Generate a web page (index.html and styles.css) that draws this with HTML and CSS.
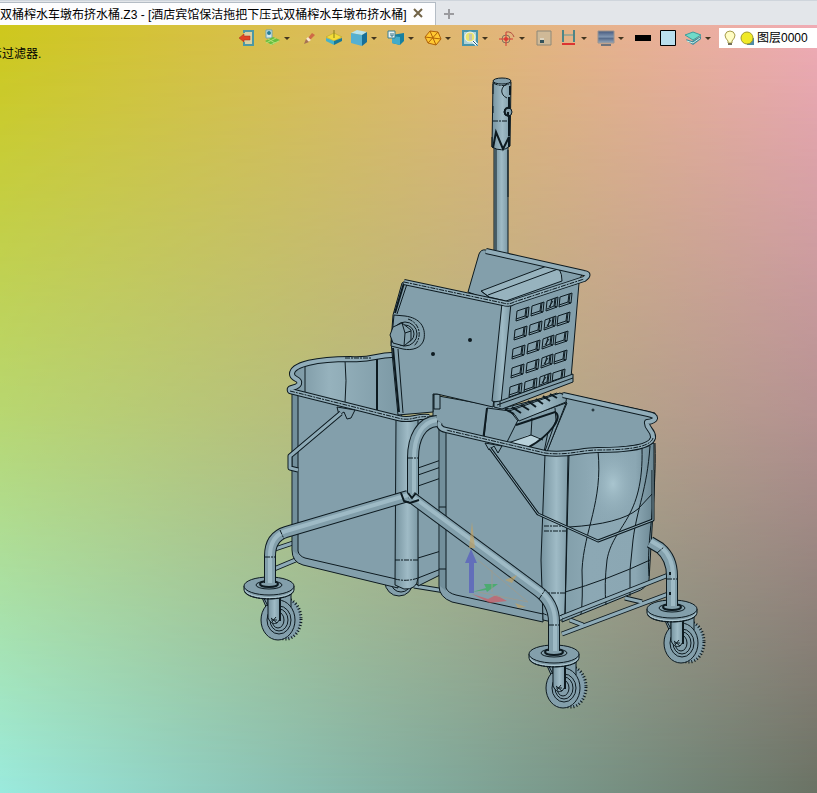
FILE: index.html
```html
<!DOCTYPE html>
<html lang="zh-CN">
<head>
    <meta charset="UTF-8">
    <meta name="viewport" content="width=device-width, initial-scale=1.0">
    <title>双桶榨水车墩布挤水桶.Z3</title>
    <link rel="stylesheet" href="styles.css">
</head>
<body>
    <header class="tab-bar">
        <div class="tab">
            <span class="tab-title">双桶榨水车墩布挤水桶.Z3 - [酒店宾馆保洁拖把下压式双桶榨水车墩布挤水桶]</span>
            <button class="tab-close" type="button" aria-label="关闭">
                <svg width="10" height="10" viewBox="0 0 10 10"><path d="M1 1L9 9M9 1L1 9" stroke="#716347" stroke-width="2"/></svg>
            </button>
        </div>
        <button class="tab-add" type="button" aria-label="新建">
            <svg width="10" height="10" viewBox="0 0 10 10"><path d="M5 0V10M0 5H10" stroke="#9b9b9f" stroke-width="2"/></svg>
        </button>
    </header>

    <main class="viewport">
        <svg class="model" viewBox="0 25 817 768" preserveAspectRatio="xMidYMid meet" aria-hidden="true">
            <defs>
                <linearGradient id="tube"><stop offset="0" stop-color="#7794a0"/><stop offset=".55" stop-color="#9fbbc6"/><stop offset="1" stop-color="#7c99a5"/></linearGradient>
                <linearGradient id="inner"><stop offset="0" stop-color="#77939f"/><stop offset=".35" stop-color="#96b2bd"/><stop offset="1" stop-color="#7b98a4"/></linearGradient>
                <linearGradient id="side"><stop offset="0" stop-color="#819ea9"/><stop offset=".3" stop-color="#8ca8b4"/><stop offset=".8" stop-color="#8ba7b3"/><stop offset="1" stop-color="#6b8793"/></linearGradient>
                <radialGradient id="shine"><stop offset="0" stop-color="#a9c5cf"/><stop offset="1" stop-color="#8ca8b4" stop-opacity="0"/></radialGradient>

                <symbol id="caster" viewBox="-30 -15 70 75" overflow="visible">
                    <ellipse class="tread" cx="18" cy="34" rx="14" ry="20"/>
                    <ellipse class="knobs" cx="17" cy="34" rx="15" ry="20"/>
                    <path class="part" d="M-9 8L-2 24L4 34L22 22V8z"/>
                    <ellipse class="part" cx="9" cy="35" rx="17" ry="20"/>
                    <ellipse class="thin" cx="10" cy="35" rx="12" ry="14"/>
                    <ellipse class="part" cx="10" cy="35" rx="9" ry="11"/>
                    <ellipse class="thin" cx="9" cy="35" rx="6" ry="8"/>
                    <path class="part" d="M-8 8L-1 21V10z"/>
                    <path class="part tubed" d="M-1 8V33Q2 40 8 38L11 34V8z"/>
                    <path class="heavy" d="M11 9V36"/>
                    <path class="thin" d="M2 33L8 38M3 37L7 32M2 35H8"/>
                    <path class="part" d="M-25 1V5C-23 17 23 17 25 5V1z"/>
                    <ellipse class="part" cx="0" cy="1" rx="25" ry="9"/>
                    <path class="light" d="M-24 5C-20 15 20 15 24 5"/>
                    <path class="dash" d="M-24 7C-20 16 20 16 24 7"/>
                    <ellipse class="thin" cx="0" cy="0" rx="13" ry="4"/>
                    <ellipse class="heavy" cx="0" cy="-1" rx="9" ry="3"/>
                </symbol>
                <symbol id="cell" viewBox="0 0 14 14" overflow="visible">
                    <path class="part" d="M1 3L13 -1L12 9L0 13z"/>
                    <path class="thin" d="M10 0L9 8L0 11M9 8L12 9M11 0L10 8"/>
                </symbol>
                <symbol id="cell-cut" viewBox="0 0 14 14" overflow="visible">
                    <path class="part" d="M1 3L12 -1L11 9L0 13z"/>
                    <path class="thin" d="M9 0L8 8L1 11M8 8L11 9M6 1L4 9M3 9L7 3M10 0L9 8"/>
                </symbol>
                <symbol id="cell-row" viewBox="0 0 60 30" overflow="visible">
                    <use href="#cell" x="0" y="0" width="14" height="14"/>
                    <use href="#cell" x="15" y="-5" width="14" height="14"/>
                    <use href="#cell-cut" x="30" y="-10" width="14" height="14"/>
                    <use href="#cell" x="43" y="-14" width="14" height="14"/>
                </symbol>
            </defs>

            <!-- 后轮与横杆 -->
            <circle class="part" cx="399" cy="582" r="14"/>
            <circle class="thin" cx="401" cy="582" r="10"/>
            <path class="bar-edge" d="M275 549L296 542M274 569L298 559M414 586L445 591"/>
            <path class="bar-fill" d="M275 549L296 542M274 569L298 559M414 586L445 591"/>

            <!-- 左桶 -->
            <path class="part" d="M416 416H442V574L418 586z"/>
            <path class="thin" d="M418 558L441 551M418 578L441 569M418 468L441 460M418 475L441 467M418 486L441 478"/>
            <path class="part" fill="url(#inner)" d="M292 376C294 364 308 360 345 358C363 361 372 354 394 353L402 418L290 392L300 382z"/>
            <path class="thin" d="M305 364V395M345 360Q347 380 345 403"/>
            <path class="heavy" d="M377 357V411"/>
            <path class="part" d="M292 392L398 419V588L303 565Q292 562 292 550z"/>
            <path class="shade" d="M293 394L298 396V555L293 551z"/>
            <path class="thin" d="M298 395V551Q299 556 305 558L396 579"/>
            <path class="part tubed" d="M396 418H418V578Q417 590 404 589L395 585z"/>
            <path class="dash" d="M395 560H418M395 579Q407 582 418 578"/>
            <path class="rim-edge" d="M394 355C378 354 373 361 350 359C318 359 292 364 292 374C292 380 301 378 299 384C297 389 288 386 290 391L398 418C412 422 416 415 429 417"/>
            <path class="rim-fill" d="M394 355C378 354 373 361 350 359C318 359 292 364 292 374C292 380 301 378 299 384C297 389 288 386 290 391L398 418C412 422 416 415 429 417"/>
            <path class="dash" d="M290 391L398 418C412 422 416 415 429 417M345 358H372"/>
            <path class="part" d="M337 407L339 415L344 412L347 419L351 418L355 410z"/>
            <path class="bar-edge" d="M341 413L290 456V468L298 470"/>
            <path class="bar-fill" d="M341 413L290 456V468L298 470"/>

            <!-- 拖把杆 -->
            <path class="part tubed" d="M494 145H508V262H494z"/>
            <path class="thin" d="M496 148V250M508 150V197"/>
            <path class="part tubed" d="M493 82L511 82L510 146Q502 153 492 147z"/>
            <ellipse class="part" cx="502" cy="81" rx="9" ry="3"/>
            <path class="dash" d="M493 83Q502 88 511 83M493 121H508"/>
            <path class="heavy" d="M493 148L496 132L503 149L509 137V147M510 86V95M509 97V136"/>
            <path class="thin" d="M507 84C500 87 500 95 507 98M493 84V94M492 137V147M493 106V113"/>
            <circle class="part" cx="508" cy="112" r="4"/>
            <path class="heavy" d="M510 108C503 106 503 117 510 116M508 112V115"/>

            <!-- 右桶 -->
            <path class="part" d="M440 424L563 393L655 413V420L646 424L653 435L652 444L570 454L545 455z"/>
            <path class="part" d="M439 427L546 455L543 622L452 602Q439 597 439 586z"/>
            <path class="shade" d="M440 430L446 431V591L440 586z"/>
            <path class="thin" d="M446 431V588Q448 593 456 595L543 614M439 507H446M439 569H446"/>
            <path class="part" fill="url(#side)" d="M566 454L654 443V495L649 580Q646 589 636 592L562 622z"/>
            <ellipse cx="613" cy="484" rx="28" ry="42" fill="url(#shine)"/>
            <path class="thin" d="M598 451C603 502 584 530 582 570Q583 600 581 614M642 448C644 520 613 525 607 560Q604 585 606 605M650 446C647 490 637 508 633 540L630 570V596M655 443C657 500 646 540 649 576"/>
            <path class="thin" d="M569 527Q620 524 638 509L653 493M562 593Q610 579 650 560"/>
            <path class="part tubed" d="M545 454H569L565 616Q560 625 543 620L541 560z"/>
            <path class="dash" d="M544 526H566M544 531H566M542 593H565M542 613Q554 619 565 614"/>
            <path class="thin" d="M568 455L565 615"/>

            <!-- 挤水口 -->
            <path class="part" d="M433 395L494 406L510 409L557 393L567 403L547 451L500 441L433 425z"/>
            <path class="part" d="M487 408L510 411L518 421L507 444L484 439z"/>
            <path class="part" d="M518 420L566 403L547 452L507 442z"/>
            <path fill="#b8d1da" d="M510 443L528 435L540 438L530 447z"/>
            <path class="thin" d="M532 418L531 435L508 443M531 435L543 440M555 408L556 420L545 451M544 452L548 432"/>
            <path class="heavy" d="M516 425L555 412C564 417 549 436 529 447M487 408L483 441"/>
            <path class="part tubed" d="M509 411L560 393Q568 396 566 402L519 421Q516 414 509 411z"/>
            <path class="heavy" d="M505 409L514 414M512 407L521 413M521 405L529 410M528 401L536 407M536 399L543 404M543 396L550 401M550 394L557 398"/>
            <path class="part" d="M434 394H440V409H434z"/>

            <path class="rim-edge" d="M563 395L648 414C658 416 657 421 647 422C646 429 654 430 653 438C650 449 618 450 598 450C580 450 568 456 545 453L446 430C440 429 438 425 440 422"/>
            <path class="rim-fill" d="M563 395L648 414C658 416 657 421 647 422C646 429 654 430 653 438C650 449 618 450 598 450C580 450 568 456 545 453L446 430C440 429 438 425 440 422"/>
            <path class="dash" d="M653 438C650 449 618 450 598 450C580 450 568 456 545 453L446 430"/>
            <circle class="thin" cx="593" cy="410" r="1"/>
            <path class="part" d="M485 443L489 450L494 446L498 453L502 446z"/>
            <path class="bar-edge thin-bar" d="M490 448L538 514L598 541L653 520V470"/>
            <path class="bar-fill thin-bar" d="M490 448L538 514L598 541L653 520V470"/>

            <!-- 挤水器 -->
            <path class="part" d="M468 292L479 254Q481 249 486 250L583 273L575 287L505 306z"/>
            <path class="roller" d="M481 291L552 264Q562 267 562 281L506 301L489 297z"/>
            <path class="thin" d="M488 295L558 269M481 291L489 297"/>
            <path class="part" d="M508 303L579 283L571 378L499 405z"/>
            <path class="part" d="M405 281L505 303L493 407L437 394H433V412L398 415L391 342L393 315L402 283z"/>
            <path class="heavy" d="M404 283L395 313M393 348L399 412"/>
            <path class="thin" d="M407 284L397 314M398 349L403 413"/>
            <path class="part tubed" d="M502 303H511L501 403L492 401z"/>
            <path class="rim-edge" d="M404 282L503 303Q509 305 514 302L584 279Q591 274 584 273L486 251"/>
            <path class="rim-fill" d="M404 282L503 303Q509 305 514 302L584 279Q591 274 584 273L486 251"/>
            <path class="dash" d="M404 282L503 303Q509 305 514 302L584 279"/>
            <use href="#cell-row" x="516" y="308" width="60" height="30"/>
            <use href="#cell-row" x="514" y="327" width="60" height="30"/>
            <use href="#cell-row" x="512" y="346" width="60" height="30"/>
            <use href="#cell-row" x="511" y="365" width="60" height="30"/>
            <use href="#cell-row" x="509" y="384" width="60" height="30"/>
            <path class="part" d="M500 401L573 374V382L502 409L494 407V402z"/>
            <path class="thin" d="M497 405L573 378M500 401V407"/>
            <path class="part" d="M394 315L405 316C420 318 426 327 424 339C422 348 412 351 403 349L391 346z"/>
            <path class="dash" d="M408 319C420 323 423 337 414 346"/>
            <circle class="part" cx="405" cy="334" r="12"/>
            <circle class="thin" cx="405" cy="334" r="9"/>
            <path class="part" d="M393 327L402 323L411 330V340L404 346L393 343L390 335z"/>
            <path class="thin" d="M402 323L405 333L404 346M405 333L411 331"/>
            <circle class="heavy" cx="433" cy="354" r="1"/>
            <circle class="heavy" cx="470" cy="340" r="1"/>

            <!-- 车架 -->
            <path class="tube-edge" d="M437 421C421 422 413 438 413 458V494"/>
            <path class="tube-fill" d="M437 421C421 422 413 438 413 458V494"/>
            <path class="tube-glow" d="M437 420C421 422 414 438 414 458V494"/>
            <path class="dash" d="M408 458H418"/>
            <path class="bar-edge" d="M562 617L671 574M562 634L671 593M570 620L583 625M625 598L642 602"/>
            <path class="bar-fill" d="M562 617L671 574M562 634L671 593M570 620L583 625M625 598L642 602"/>
            <use href="#caster" x="239" y="570" width="70" height="75"/>
            <use href="#caster" x="524" y="638" width="70" height="75"/>
            <use href="#caster" x="642" y="593" width="70" height="75"/>
            <path class="tube-edge" d="M408 496L286 532Q270 537 270 556V583M411 497L538 591Q554 603 554 622V651M650 542L660 548Q672 558 672 576V606"/>
            <path class="tube-fill" d="M408 496L286 532Q270 537 270 556V583M411 497L538 591Q554 603 554 622V651M650 542L660 548Q672 558 672 576V606"/>
            <path class="tube-glow" d="M408 495L286 531Q270 536 270 556V583M412 496L539 590Q555 602 555 622V651M651 541L661 547Q673 557 673 576V606"/>
            <path class="dash" d="M265 557H275M280 530L284 539M539 599L545 590M549 625H559M657 553L664 547M667 579H677"/>
            <path class="heavy" d="M401 493L404 501L410 503L419 500M408 493L412 498L416 493M670 572V575M670 592V595"/>

            <!-- 坐标轴 -->
            <g class="axes">
                <path fill="#c9a35c" d="M472 522L475 548H469z"/>
                <path fill="#4d4fc4" d="M469 593V563H465L471 549L477 563H474V593z"/>
                <path fill="#c9a35c" d="M505 580L517 575L512 583zM515 603L526 607L518 608z"/>
                <path fill="#28b34b" d="M472 592L486 588L484 584L498 584L487 592L486 590z"/>
                <path fill="#dd5058" d="M472 594L488 599L496 595L507 601L490 603z"/>
                <path fill="none" stroke="#a69a83" d="M478 560L528 602L478 592M492 570V592"/>
            </g>
        </svg>

        <div class="toolbar">
            <div class="tools" role="toolbar" aria-label="视图工具">
                <button class="tool" type="button" aria-label="退出">
                    <svg viewBox="0 0 18 18"><path d="M6 4V2H15V16H6V13" fill="#dbd0a0" stroke="#4c98a4" stroke-width="2"/><path d="M1 9L6 5V7H12V11H6V13z" fill="#e04524" stroke="#a42f19" stroke-width=".5"/></svg>
                </button>
                <button class="tool has-menu" type="button" aria-label="选择">
                    <svg viewBox="0 0 18 18"><path d="M3 1H9V9H3z" fill="#d5e7e7" stroke="#6ea6b5"/><circle cx="6" cy="4" r="2" fill="#247c97"/><path d="M2 12L10 8L17 11L9 16z" fill="#66bf3f"/><path d="M3 14L13 9M7 16L16 12M5 10L12 14" stroke="#b2df79"/></svg>
                </button>
                <button class="tool" type="button" aria-label="画刷">
                    <svg viewBox="0 0 18 18"><path d="M8 9L12 4L15 6L10 11z" fill="#cf6a46"/><path d="M6 10L8 8L11 11L8 13z" fill="#f7e6cd"/><path d="M4 15L6 10L9 13z" fill="#a67254"/></svg>
                </button>
                <button class="tool" type="button" aria-label="基准面">
                    <svg viewBox="0 0 18 18"><path d="M1 8L9 4L17 8L9 12z" fill="#f4dd38" stroke="#ad9a28" stroke-width=".5"/><path d="M1 9L9 12V16L1 12z" fill="#45b3cb"/><path d="M17 9L9 12V16L17 12z" fill="#187997"/><path d="M9 1V9" stroke="#877d18"/></svg>
                </button>
                <button class="tool has-menu" type="button" aria-label="视图方向">
                    <svg viewBox="0 0 18 18"><path d="M1 4L7 1L17 3L12 6z" fill="#b8e4ef"/><path d="M1 4L12 6V17L1 14z" fill="#55b0d1"/><path d="M12 6L17 3V13L12 17z" fill="#176f98"/></svg>
                </button>
                <button class="tool has-menu" type="button" aria-label="定向视图">
                    <svg viewBox="0 0 18 18"><path d="M5 6L17 4V12L13 16L5 14z" fill="#1680a0"/><path d="M5 7L13 8V16L5 14z" fill="#42abc9"/><path d="M1 2H8V9H1z" fill="#e9f4f5" stroke="#397e92"/><path d="M4 4V7H6V4" fill="none" stroke="#347086"/></svg>
                </button>
                <button class="tool has-menu" type="button" aria-label="线框">
                    <svg viewBox="0 0 18 18"><path d="M1 8L6 2L14 3L17 10L12 16L4 14zM1 8L9 9L17 10M6 2L9 9L12 16M14 3L4 14" fill="#ffc832" stroke="#b06208"/></svg>
                </button>
                <button class="tool has-menu" type="button" aria-label="缩放">
                    <svg viewBox="0 0 18 18"><path d="M2 2H16V16H2z" fill="#b0d3d5" stroke="#4695ab" stroke-width="2"/><circle cx="9" cy="8" r="5" fill="#e9e46e" stroke="#eef4f6"/><path d="M8 5H11V11H8z" fill="#c1c3b4"/><path d="M12 12L16 16" stroke="#fff" stroke-width="3"/><path d="M12 12L16 16" stroke="#225b77"/></svg>
                </button>
                <button class="tool has-menu" type="button" aria-label="旋转中心">
                    <svg viewBox="0 0 18 18"><circle cx="8" cy="10" r="4" fill="none" stroke="#80745f"/><path d="M8 3V17M1 10H15" stroke="#d93932"/><circle cx="8" cy="10" r="2" fill="#db3a34"/><path d="M8 3Q14 2 16 8" fill="none" stroke="#b54f43"/></svg>
                </button>
                <button class="tool" type="button" aria-label="窗口">
                    <svg viewBox="0 0 18 18"><path d="M2 2H16V16H2z" fill="#cfb997" stroke="#8d8878"/><path d="M5 11H9V14H5z" fill="#34535b"/><path d="M5 10H9" stroke="#e8eee8"/></svg>
                </button>
                <button class="tool has-menu" type="button" aria-label="测量">
                    <svg viewBox="0 0 18 18"><path d="M3 1V13M14 1V13" stroke="#4d8586" stroke-width="2"/><path d="M4 6H13" stroke="#5f9a99"/><path d="M2 15H15" stroke="#dc3431" stroke-width="2"/></svg>
                </button>
                <button class="tool has-menu" type="button" aria-label="显示">
                    <svg viewBox="0 0 18 18"><defs><linearGradient id="screen" x2="0" y2="1"><stop stop-color="#45597e"/><stop offset=".5" stop-color="#8398b2"/><stop offset=".6" stop-color="#53698a"/><stop offset="1" stop-color="#98a9bb"/></linearGradient></defs><path d="M1 2H17V14H1z" fill="url(#screen)" stroke="#9a9490"/><path d="M4 16H14" stroke="#70747c" stroke-width="2"/></svg>
                </button>
                <button class="tool" type="button" aria-label="线色">
                    <svg viewBox="0 0 18 18"><path d="M1 6H17V12H1z" fill="#000"/></svg>
                </button>
                <button class="tool" type="button" aria-label="面色">
                    <svg viewBox="0 0 18 18"><path d="M1.500 1.500H16.500V16.500H1.500z" fill="#b9dfee" stroke="#000"/></svg>
                </button>
                <button class="tool has-menu" type="button" aria-label="图层管理">
                    <svg viewBox="0 0 18 18"><path d="M2 10L8 12L17 7V10L9 16L3 12z" fill="#428f9e"/><path d="M1 6L9 3L17 6L9 11z" fill="#6fdac9" stroke="#409c9b"/><path d="M3 12L9 14L16 9" fill="none" stroke="#cdeee5"/></svg>
                </button>
            </div>
            <label class="layer-box">
                <svg width="14" height="16" viewBox="0 0 14 16"><path d="M5 11Q2 8 2 5Q3 1 7 1Q11 1 12 5Q12 8 9 11V13H5V11z" fill="#fffdc4" stroke="#a69c4b"/><path d="M5 14H9" stroke="#736f57" stroke-width="2"/></svg>
                <svg width="14" height="14" viewBox="0 0 14 14"><path d="M7 7H14V14H7z" fill="#4e8ba7"/><circle cx="7" cy="7" r="6" fill="#f0e927" stroke="#a29a2a"/></svg>
                <select class="layer-select" aria-label="图层"><option>图层0000</option></select>
            </label>
        </div>
        <p class="prompt">示过滤器.</p>
    </main>
</body>
</html>
```
FILE: styles.css
```css
* {
    box-sizing: border-box;
}
body {
    margin: 0;
    height: 100vh;
    display: flex;
    flex-direction: column;
    overflow: hidden;
    font-family: "Liberation Sans", "Noto Sans CJK SC", sans-serif;
    font-size: 12px;
    color: #000;
}
button {
    border: 0;
    padding: 0;
    background: none;
    font: inherit;
}

/* 标签栏 */
.tab-bar {
    display: flex;
    align-items: stretch;
    height: 25px;
    padding-top: 1px;
    background: #e3e6ea;
    border-top: 1px solid #cfd5dc;
}
.tab {
    display: flex;
    align-items: center;
    gap: 6px;
    padding-right: 12px;
    padding-bottom: 2px;
    background: #fdfdfe;
    border-top: 1px solid #b4bcc5;
    border-right: 1px solid #b4bcc5;
    white-space: nowrap;
}
.tab-close,
.tab-add {
    display: flex;
    align-items: center;
}
.tab-add {
    margin-left: 8px;
}

/* 视图区：四角渐变 */
.viewport {
    position: relative;
    flex: 1;
    min-height: 0;
    background: linear-gradient(to right, #cfc81c, #f0abb5);
}
.viewport::before {
    content: "";
    position: absolute;
    inset: 0;
    background: linear-gradient(to right, #9aeade, #6a7264);
    -webkit-mask-image: linear-gradient(transparent, rgba(0, 0, 0, .43) 50%, #000);
    mask-image: linear-gradient(transparent, rgba(0, 0, 0, .43) 50%, #000);
}
.model {
    position: absolute;
    inset: 0;
    width: 100%;
    height: 100%;
}

/* 工具栏 */
.toolbar {
    position: relative;
    display: flex;
    justify-content: flex-end;
    align-items: center;
    gap: 5px;
    padding-top: 3px;
}
.tools {
    display: flex;
    flex: none;
    gap: 7px;
}
.tool {
    display: flex;
    align-items: center;
    flex: none;
}
.tool svg {
    width: 18px;
    height: 18px;
}
.has-menu::after {
    content: "";
    margin: 0 3px;
    border: 3px solid transparent;
    border-top-color: #42351f;
    border-bottom: 0;
}
.layer-box {
    display: flex;
    align-items: center;
    gap: 3px;
    flex: none;
    width: 98px;
    height: 20px;
    padding-left: 4px;
    background: #fff;
}
.layer-box svg {
    flex: none;
}
.layer-select {
    appearance: none;
    flex: 1;
    min-width: 0;
    padding: 0;
    border: 0;
    background: none;
    font: inherit;
    color: inherit;
}
.prompt {
    position: relative;
    margin: 0 0 0 -10px;
    line-height: 12px;
}

/* 模型线条 */
.part,
.roller {
    stroke: #0d1a20;
    stroke-width: 1;
    stroke-linejoin: round;
}
.part:not([fill]) {
    fill: #839fab;
}
.part.tubed {
    fill: url(#tube);
}
.roller {
    fill: #97b3be;
}
.shade {
    fill: #728f9b;
}
.thin,
.heavy,
.dash,
.light,
.knobs {
    fill: none;
    stroke: #0d1a20;
    stroke-width: 1;
}
.heavy {
    stroke-width: 2;
}
.dash {
    stroke-dasharray: 5 1 2 1;
}
.light {
    stroke: #b4ccd5;
}
.tread {
    fill: #839fab;
}
.knobs {
    stroke-width: 3;
    stroke-dasharray: 1 2;
}
.rim-edge,
.rim-fill,
.bar-edge,
.bar-fill,
.tube-edge,
.tube-fill,
.tube-glow {
    fill: none;
    stroke-linejoin: round;
}
.rim-edge {
    stroke: #0d1a20;
    stroke-width: 6;
}
.rim-fill {
    stroke: #91adb9;
    stroke-width: 4;
}
.bar-edge {
    stroke: #0d1a20;
    stroke-width: 5;
}
.bar-fill {
    stroke: #8eabb7;
    stroke-width: 3;
}
.bar-edge.thin-bar {
    stroke-width: 3;
}
.bar-fill.thin-bar {
    stroke-width: 1;
}
.tube-edge {
    stroke: #0d1a20;
    stroke-width: 12;
}
.tube-fill {
    stroke: #829fab;
    stroke-width: 10;
}
.tube-glow {
    stroke: #9ebac5;
    stroke-width: 4;
}
.axes {
    opacity: .6;
}
```
